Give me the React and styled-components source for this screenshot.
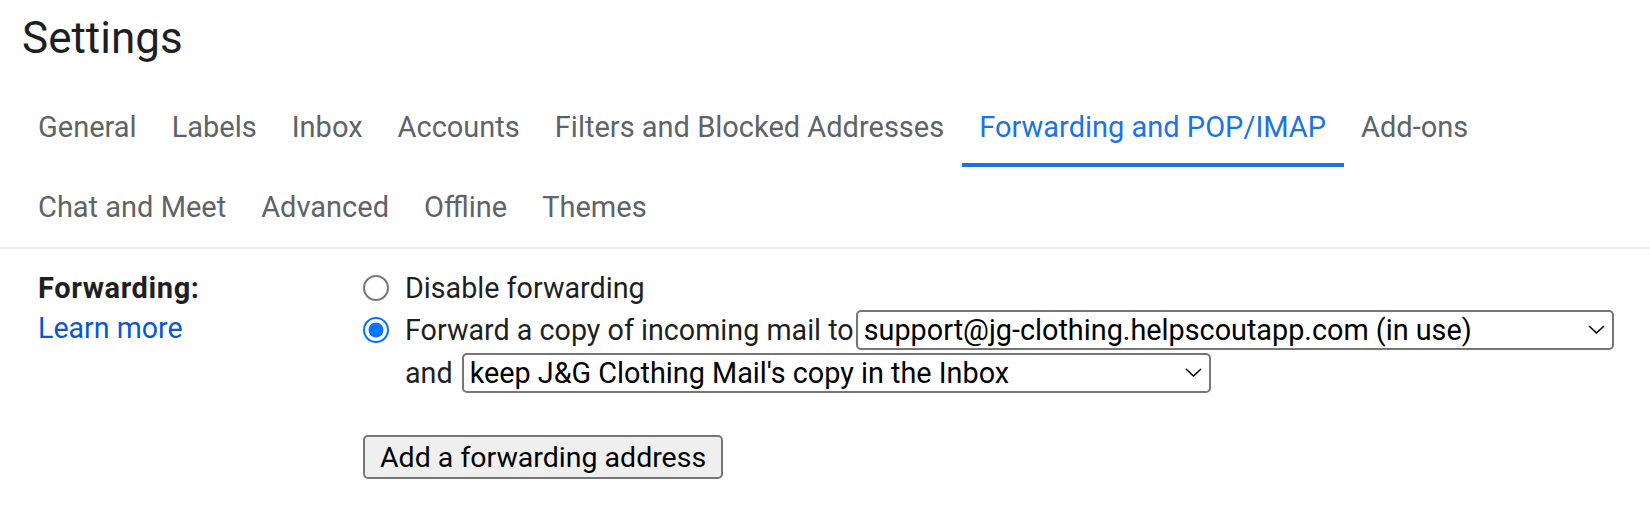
import React from "react"
import styled, { createGlobalStyle } from "styled-components"

const GlobalStyle = createGlobalStyle`
  body {
    margin: 0;
    background: #ffffff;
    font-family: Roboto, "Liberation Sans", Arial, sans-serif;
  }
`

const Page = styled.div`
  padding: 13px 0 0 22px;
`

const Title = styled.h1`
  margin: 0 0 23px 0;
  font-size: 44px;
  font-weight: 400;
  line-height: 51px;
  color: #1f1f1f;
`

const TabBar = styled.nav`
  margin-left: -22px;
  padding-left: 20.5px;
  border-bottom: 2px solid #ececf1;
`

const TabRow = styled.div`
  display: flex;
  height: 80px;
`

const Tab = styled.div`
  padding: 0 17.5px;
  font-size: 29px;
  line-height: 80px;
  white-space: nowrap;
  color: ${props => (props.$active ? "#1a73e8" : "#5f6368")};
  box-shadow: ${props => (props.$active ? "inset 0 -4px 0 #1a73e8" : "none")};
  cursor: pointer;
`

const Section = styled.div`
  display: grid;
  grid-template-columns: 325px 1fr;
  padding: 19px 0 0 16px;
`

const FieldLabel = styled.div`
  font-size: 29px;
  line-height: 40px;
  font-weight: 700;
  letter-spacing: 0.6px;
  color: #1f1f1f;
`

const LearnMore = styled.a`
  display: block;
  font-size: 28.6px;
  line-height: 40px;
  color: #0b57d0;
  text-decoration: none;
`

const Options = styled.div`
  display: flex;
  flex-direction: column;
  align-items: flex-start;
`

const OptionRow = styled.label`
  display: flex;
  align-items: center;
  min-height: 40px;
  margin-top: ${props => props.$top || 0}px;
  margin-left: ${props => props.$indent || 0}px;
  font-size: 28.7px;
  color: #1f1f1f;
`

const Radio = styled.span`
  box-sizing: border-box;
  width: 26px;
  height: 26px;
  margin-right: 16px;
  border-radius: 50%;
  border: 2px solid ${props => (props.$checked ? "#0075ff" : "#767676")};
  background: ${props =>
    props.$checked
      ? "radial-gradient(circle, #0075ff 0 7px, #ffffff 7.8px)"
      : "#ffffff"};
  flex-shrink: 0;
`

const OptionText = styled.span`
  margin-right: ${props => props.$gap ?? 10}px;
  white-space: nowrap;
`

const SelectWrap = styled.span`
  position: relative;
  display: inline-flex;
`

const Select = styled.select`
  appearance: none;
  box-sizing: border-box;
  width: ${props => props.$width}px;
  height: 40px;
  padding: 0 40px 0 6px;
  border: 2px solid #767676;
  border-radius: 5px;
  background: #ffffff;
  font-family: Roboto, "Liberation Sans", Arial, sans-serif;
  font-size: 28.8px;
  color: #000000;
`

const Chevron = styled.svg`
  position: absolute;
  right: 9px;
  top: 15px;
  pointer-events: none;
`

const Button = styled.button`
  box-sizing: border-box;
  height: 44px;
  margin-top: 42px;
  padding: 0 15px;
  border: 2px solid #767676;
  border-radius: 5px;
  background: #efefef;
  font-family: Roboto, "Liberation Sans", Arial, sans-serif;
  font-size: 28.5px;
  color: #000000;
  cursor: pointer;
`

const Dropdown = ({ width, value }) => (
  <SelectWrap>
    <Select $width={width} defaultValue={value}>
      <option>{value}</option>
    </Select>
    <Chevron width="17" height="9" viewBox="0 0 17 9">
      <path d="M1 1 L8.5 8 L16 1" fill="none" stroke="#000" strokeWidth="1.6" />
    </Chevron>
  </SelectWrap>
)

const rowOne = [
  "General",
  "Labels",
  "Inbox",
  "Accounts",
  "Filters and Blocked Addresses",
  "Forwarding and POP/IMAP",
  "Add-ons",
]
const rowTwo = ["Chat and Meet", "Advanced", "Offline", "Themes"]
const activeTab = "Forwarding and POP/IMAP"

export default function App() {
  return (
    <>
      <GlobalStyle />
      <Page>
        <Title>Settings</Title>
        <TabBar>
          {[rowOne, rowTwo].map((row, i) => (
            <TabRow key={i}>
              {row.map(name => (
                <Tab key={name} $active={name === activeTab}>
                  {name}
                </Tab>
              ))}
            </TabRow>
          ))}
        </TabBar>
        <Section>
          <div>
            <FieldLabel>Forwarding:</FieldLabel>
            <LearnMore href="#">Learn more</LearnMore>
          </div>
          <Options>
            <OptionRow>
              <Radio />
              <OptionText>Disable forwarding</OptionText>
            </OptionRow>
            <OptionRow $top={2}>
              <Radio $checked />
              <OptionText $gap={2}>Forward a copy of incoming mail to</OptionText>
              <Dropdown
                width={758}
                value="support@jg-clothing.helpscoutapp.com (in use)"
              />
            </OptionRow>
            <OptionRow $top={3} $indent={42}>
              <OptionText $gap={9}>and</OptionText>
              <Dropdown width={749} value="keep J&G Clothing Mail's copy in the Inbox" />
            </OptionRow>
            <Button type="button">Add a forwarding address</Button>
          </Options>
        </Section>
      </Page>
    </>
  )
}
